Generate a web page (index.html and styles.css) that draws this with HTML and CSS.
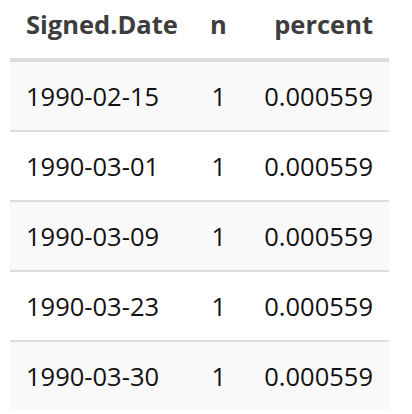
FILE: index.html
```html
<!DOCTYPE html>
<html>
<head>
<meta charset="utf-8">
<link rel="stylesheet" href="styles.css">
</head>
<body>
<table class="data">
  <colgroup>
    <col class="c-date">
    <col class="c-n">
    <col class="c-pct">
  </colgroup>
  <thead>
    <tr><th class="left">Signed.Date</th><th class="num">n</th><th class="num">percent</th></tr>
  </thead>
  <tbody>
    <tr class="odd"><td class="left">1990-02-15</td><td class="num">1</td><td class="num">0.000559</td></tr>
    <tr><td class="left">1990-03-01</td><td class="num">1</td><td class="num">0.000559</td></tr>
    <tr class="odd"><td class="left">1990-03-09</td><td class="num">1</td><td class="num">0.000559</td></tr>
    <tr><td class="left">1990-03-23</td><td class="num">1</td><td class="num">0.000559</td></tr>
    <tr class="odd"><td class="left">1990-03-30</td><td class="num">1</td><td class="num">0.000559</td></tr>
  </tbody>
</table>
</body>
</html>
```
FILE: styles.css
```css
html, body {
  margin: 0;
  padding: 0;
  background: #ffffff;
}
body {
  padding-left: 10px;
  font-family: "Open Sans", "Liberation Sans", sans-serif;
}
.data {
  border-collapse: collapse;
  border-spacing: 0;
  width: 379px;
  table-layout: fixed;
  font-size: 25.5px;
  line-height: 36px;
}
.c-date { width: 196px; }
.c-n { width: 36px; }
.c-pct { width: 147px; }
th {
  font-weight: 700;
  color: #3d3d3d;
  padding: 6px 16px 16px 16px;
  border-bottom: 4px solid #dddddd;
  white-space: nowrap;
}
td {
  color: #111111;
  padding: 16px;
  border-bottom: 2px solid #dddddd;
  white-space: nowrap;
}
th.num, td.num { padding-left: 4px; }
tbody tr:last-child td { border-bottom: none; }
.left { text-align: left; }
.num { text-align: right; }
tr.odd td { background: #f9f9f9; }
```
